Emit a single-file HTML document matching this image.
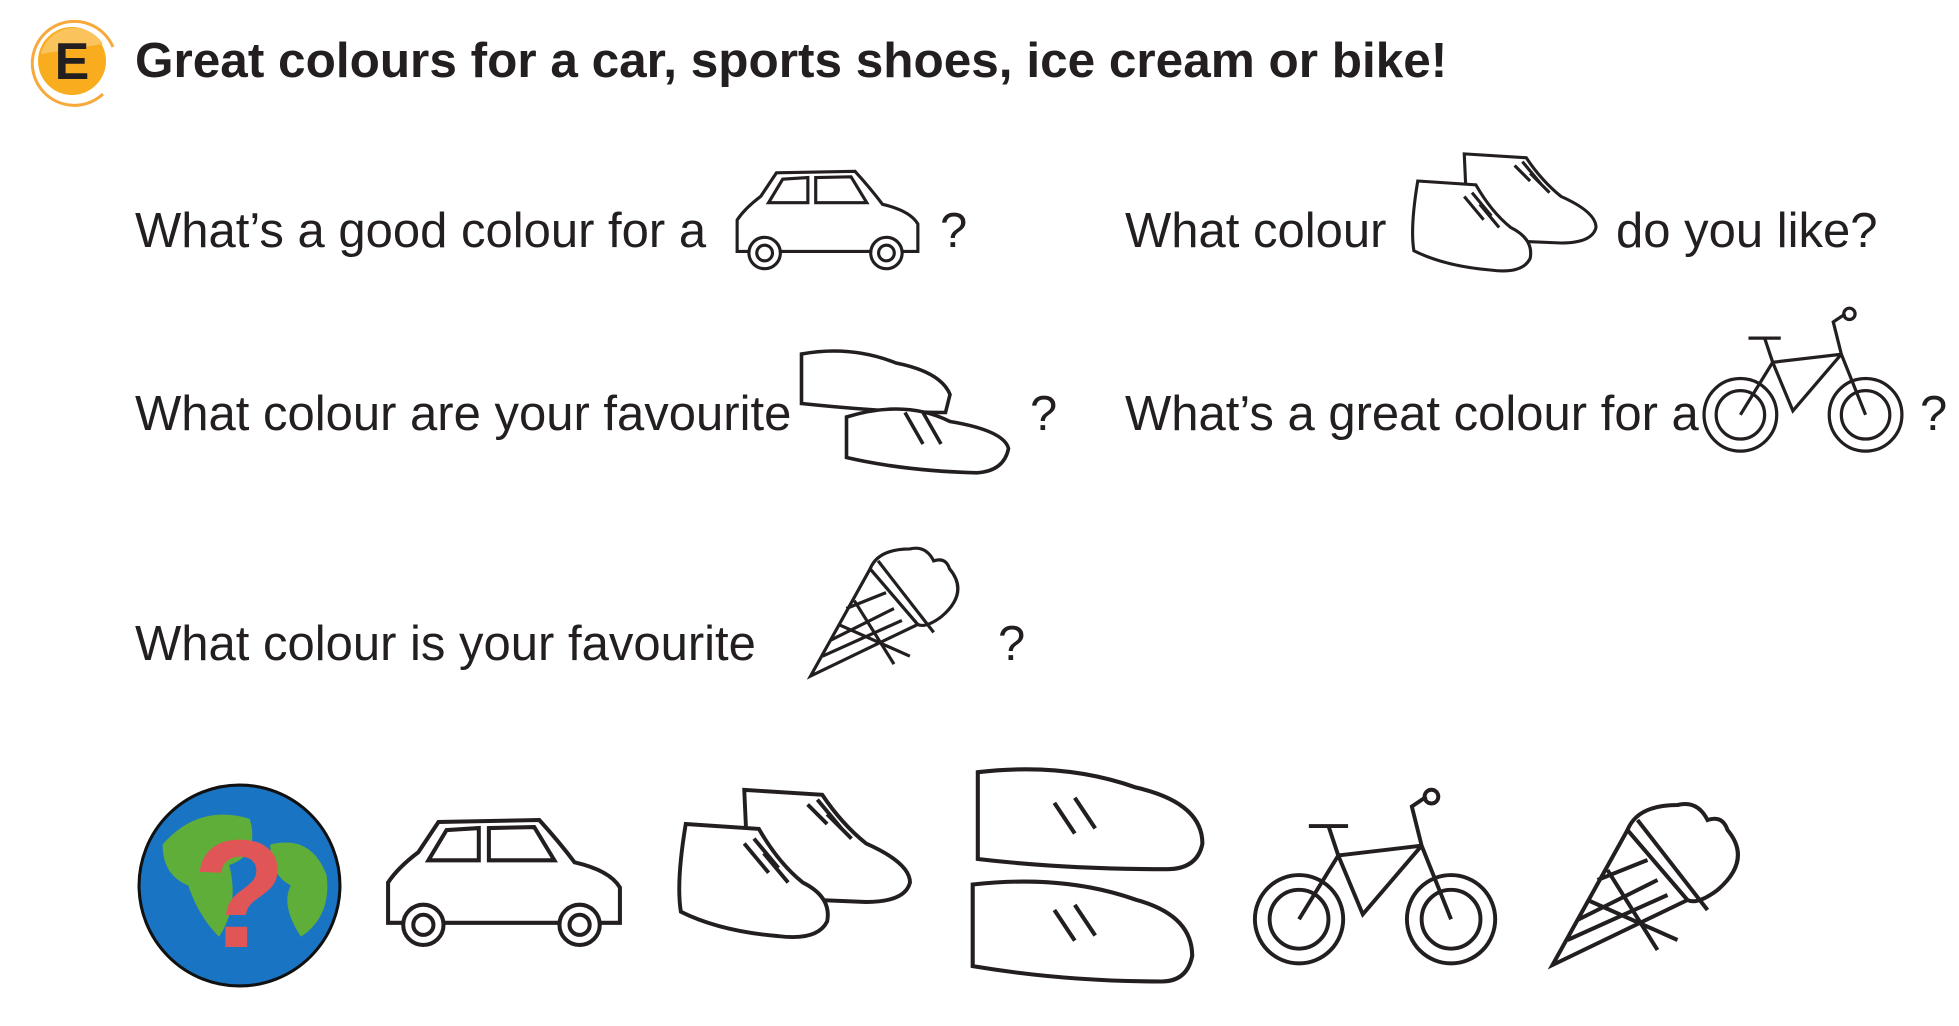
<!DOCTYPE html>
<html><head><meta charset="utf-8"><style>
body{margin:0;width:1959px;height:1026px;background:#fff;position:relative;overflow:hidden;font-family:"Liberation Sans",sans-serif;color:#231f20}
.t{position:absolute;font-size:49px;white-space:nowrap;line-height:1}
svg{position:absolute}
</style></head><body>
<svg style="left:25px;top:14px" width="100" height="95" viewBox="0 0 100 95">
<path d="M88 33 A42 42 0 1 0 78 80" fill="none" stroke="#f7a93b" stroke-width="3"/>
<circle cx="47" cy="47" r="34" fill="#f9ac1e"/>
<path d="M16 40 A34 34 0 0 1 78 30 Z" fill="#fbc35c"/>
<text x="47" y="65" font-size="52" font-weight="bold" text-anchor="middle" fill="#231f20" font-family="Liberation Sans">E</text>
</svg>
<div class="t" style="left:135px;top:36px;font-size:49.5px;font-weight:bold">Great colours for a car, sports shoes, ice cream or bike!</div>

<div class="t" style="left:135px;top:207px">What’s a good colour for a</div>
<div class="t" style="left:940px;top:207px">?</div>
<div class="t" style="left:1125px;top:207px">What colour</div>
<div class="t" style="left:1616px;top:207px">do you like?</div>
<div class="t" style="left:135px;top:390px">What colour are your favourite</div>
<div class="t" style="left:1030px;top:390px">?</div>
<div class="t" style="left:1125px;top:390px">What’s a great colour for a</div>
<div class="t" style="left:1920px;top:390px">?</div>
<div class="t" style="left:135px;top:620px">What colour is your favourite</div>
<div class="t" style="left:998px;top:620px">?</div>

<svg style="left:725px;top:165px" width="205" height="110" viewBox="0 0 250 140" fill="#fff" stroke="#231f20" stroke-width="4">
<path d="M10 110 L10 70 Q20 55 40 40 L60 10 L160 8 Q180 30 195 50 Q230 58 240 75 L240 110 Z"/>
<path d="M50 48 L68 18 L100 16 L100 48 Z M110 16 L155 15 L175 48 L110 48 Z"/>
<circle cx="45" cy="112" r="20"/><circle cx="45" cy="112" r="10"/><circle cx="200" cy="112" r="20"/><circle cx="200" cy="112" r="10"/>
</svg>
<svg style="left:378px;top:810px" width="252" height="145" viewBox="0 0 250 140" fill="#fff" stroke="#231f20" stroke-width="4">
<path d="M10 110 L10 70 Q20 55 40 40 L60 10 L160 8 Q180 30 195 50 Q230 58 240 75 L240 110 Z"/>
<path d="M50 48 L68 18 L100 16 L100 48 Z M110 16 L155 15 L175 48 L110 48 Z"/>
<circle cx="45" cy="112" r="20"/><circle cx="45" cy="112" r="10"/><circle cx="200" cy="112" r="20"/><circle cx="200" cy="112" r="10"/>
</svg>
<svg style="left:1403px;top:150px" width="200" height="155" viewBox="0 0 250 200" fill="#fff" stroke="#231f20" stroke-width="4">
<path d="M75 5 L155 10 Q175 40 200 60 Q245 80 245 100 Q240 120 200 120 L80 115 Z"/>
<path d="M140 20 L160 40 M150 15 L175 45 M160 30 L185 55" />
<path d="M15 40 L90 45 Q110 80 135 100 Q165 115 160 140 Q150 160 110 155 Q50 150 10 130 Q5 100 15 40 Z"/>
<path d="M75 60 L100 90 M85 55 L110 85 M95 70 L120 100"/>
</svg>
<svg style="left:668px;top:785px" width="250" height="195" viewBox="0 0 250 200" fill="#fff" stroke="#231f20" stroke-width="4">
<path d="M75 5 L155 10 Q175 40 200 60 Q245 80 245 100 Q240 120 200 120 L80 115 Z"/>
<path d="M140 20 L160 40 M150 15 L175 45 M160 30 L185 55" />
<path d="M15 40 L90 45 Q110 80 135 100 Q165 115 160 140 Q150 160 110 155 Q50 150 10 130 Q5 100 15 40 Z"/>
<path d="M75 60 L100 90 M85 55 L110 85 M95 70 L120 100"/>
</svg>
<svg style="left:795px;top:345px" width="220" height="135" viewBox="0 0 240 150" fill="#fff" stroke="#231f20" stroke-width="4">
<path d="M5 10 Q60 0 110 20 Q160 30 170 55 L165 75 Q100 75 5 65 Z"/>
<path d="M55 80 Q120 60 170 85 Q230 95 235 115 Q230 140 200 142 Q120 140 55 125 Z"/>
<path d="M120 75 L140 110 M140 75 L160 110"/>
</svg>
<svg style="left:960px;top:762px" width="250" height="245" viewBox="0 0 240 240" fill="#fff" stroke="#231f20" stroke-width="4">
<path d="M15 10 Q100 0 170 25 Q235 40 235 80 Q230 105 200 105 Q100 105 15 95 Z"/>
<path d="M90 40 L110 70 M110 35 L130 65"/>
<path d="M10 120 Q100 110 170 135 Q225 150 225 190 Q220 215 195 215 Q100 215 10 200 Z"/>
<path d="M90 145 L110 175 M110 140 L130 170"/>
</svg>
<svg style="left:1700px;top:305px" width="210" height="155" viewBox="0 0 260 190" fill="none" stroke="#231f20" stroke-width="4">
<circle cx="50" cy="135" r="45"/><circle cx="50" cy="135" r="30"/><circle cx="205" cy="135" r="45"/><circle cx="205" cy="135" r="30"/>
<path d="M50 135 L90 70 L175 60 L205 135 M90 70 L115 130 L175 60 M175 60 L165 20 L180 10 M60 40 L100 40 M80 40 L90 70"/>
<circle cx="185" cy="10" r="7"/>
</svg>
<svg style="left:1250px;top:785px" width="255" height="190" viewBox="0 0 260 190" fill="none" stroke="#231f20" stroke-width="4">
<circle cx="50" cy="135" r="45"/><circle cx="50" cy="135" r="30"/><circle cx="205" cy="135" r="45"/><circle cx="205" cy="135" r="30"/>
<path d="M50 135 L90 70 L175 60 L205 135 M90 70 L115 130 L175 60 M175 60 L165 20 L180 10 M60 40 L100 40 M80 40 L90 70"/>
<circle cx="185" cy="10" r="7"/>
</svg>
<svg style="left:805px;top:545px" width="170" height="135" viewBox="0 0 210 170" fill="#fff" stroke="#231f20" stroke-width="4">
<path d="M5 165 L80 30 L140 100 Z"/>
<path d="M30 120 L110 80 M20 140 L120 95 M50 80 L100 60 M40 100 L130 140 M60 70 L110 150"/>
<path d="M80 30 Q90 5 130 5 Q150 0 160 20 Q175 15 180 30 Q205 60 170 90 Q150 105 140 100 Z"/>
<path d="M90 20 L160 110"/>
</svg>
<svg style="left:1545px;top:800px" width="215" height="170" viewBox="0 0 210 170" fill="#fff" stroke="#231f20" stroke-width="4">
<path d="M5 165 L80 30 L140 100 Z"/>
<path d="M30 120 L110 80 M20 140 L120 95 M50 80 L100 60 M40 100 L130 140 M60 70 L110 150"/>
<path d="M80 30 Q90 5 130 5 Q150 0 160 20 Q175 15 180 30 Q205 60 170 90 Q150 105 140 100 Z"/>
<path d="M90 20 L160 110"/>
</svg>
<svg style="left:137px;top:783px" width="205" height="205" viewBox="0 0 200 200">
<circle cx="100" cy="100" r="98" fill="#1a74c4" stroke="#111" stroke-width="3"/>
<path d="M25 60 Q60 20 110 35 Q120 70 90 80 Q100 120 80 150 Q60 130 50 100 Q25 90 25 60 Z" fill="#5fae3a"/>
<path d="M130 60 Q170 50 185 90 Q190 130 160 150 Q140 120 150 100 Q130 90 130 60 Z" fill="#5fae3a"/>
<text x="100" y="160" font-size="150" font-weight="bold" text-anchor="middle" fill="#e05656" font-family="Liberation Sans">?</text>
</svg>
</body></html>
